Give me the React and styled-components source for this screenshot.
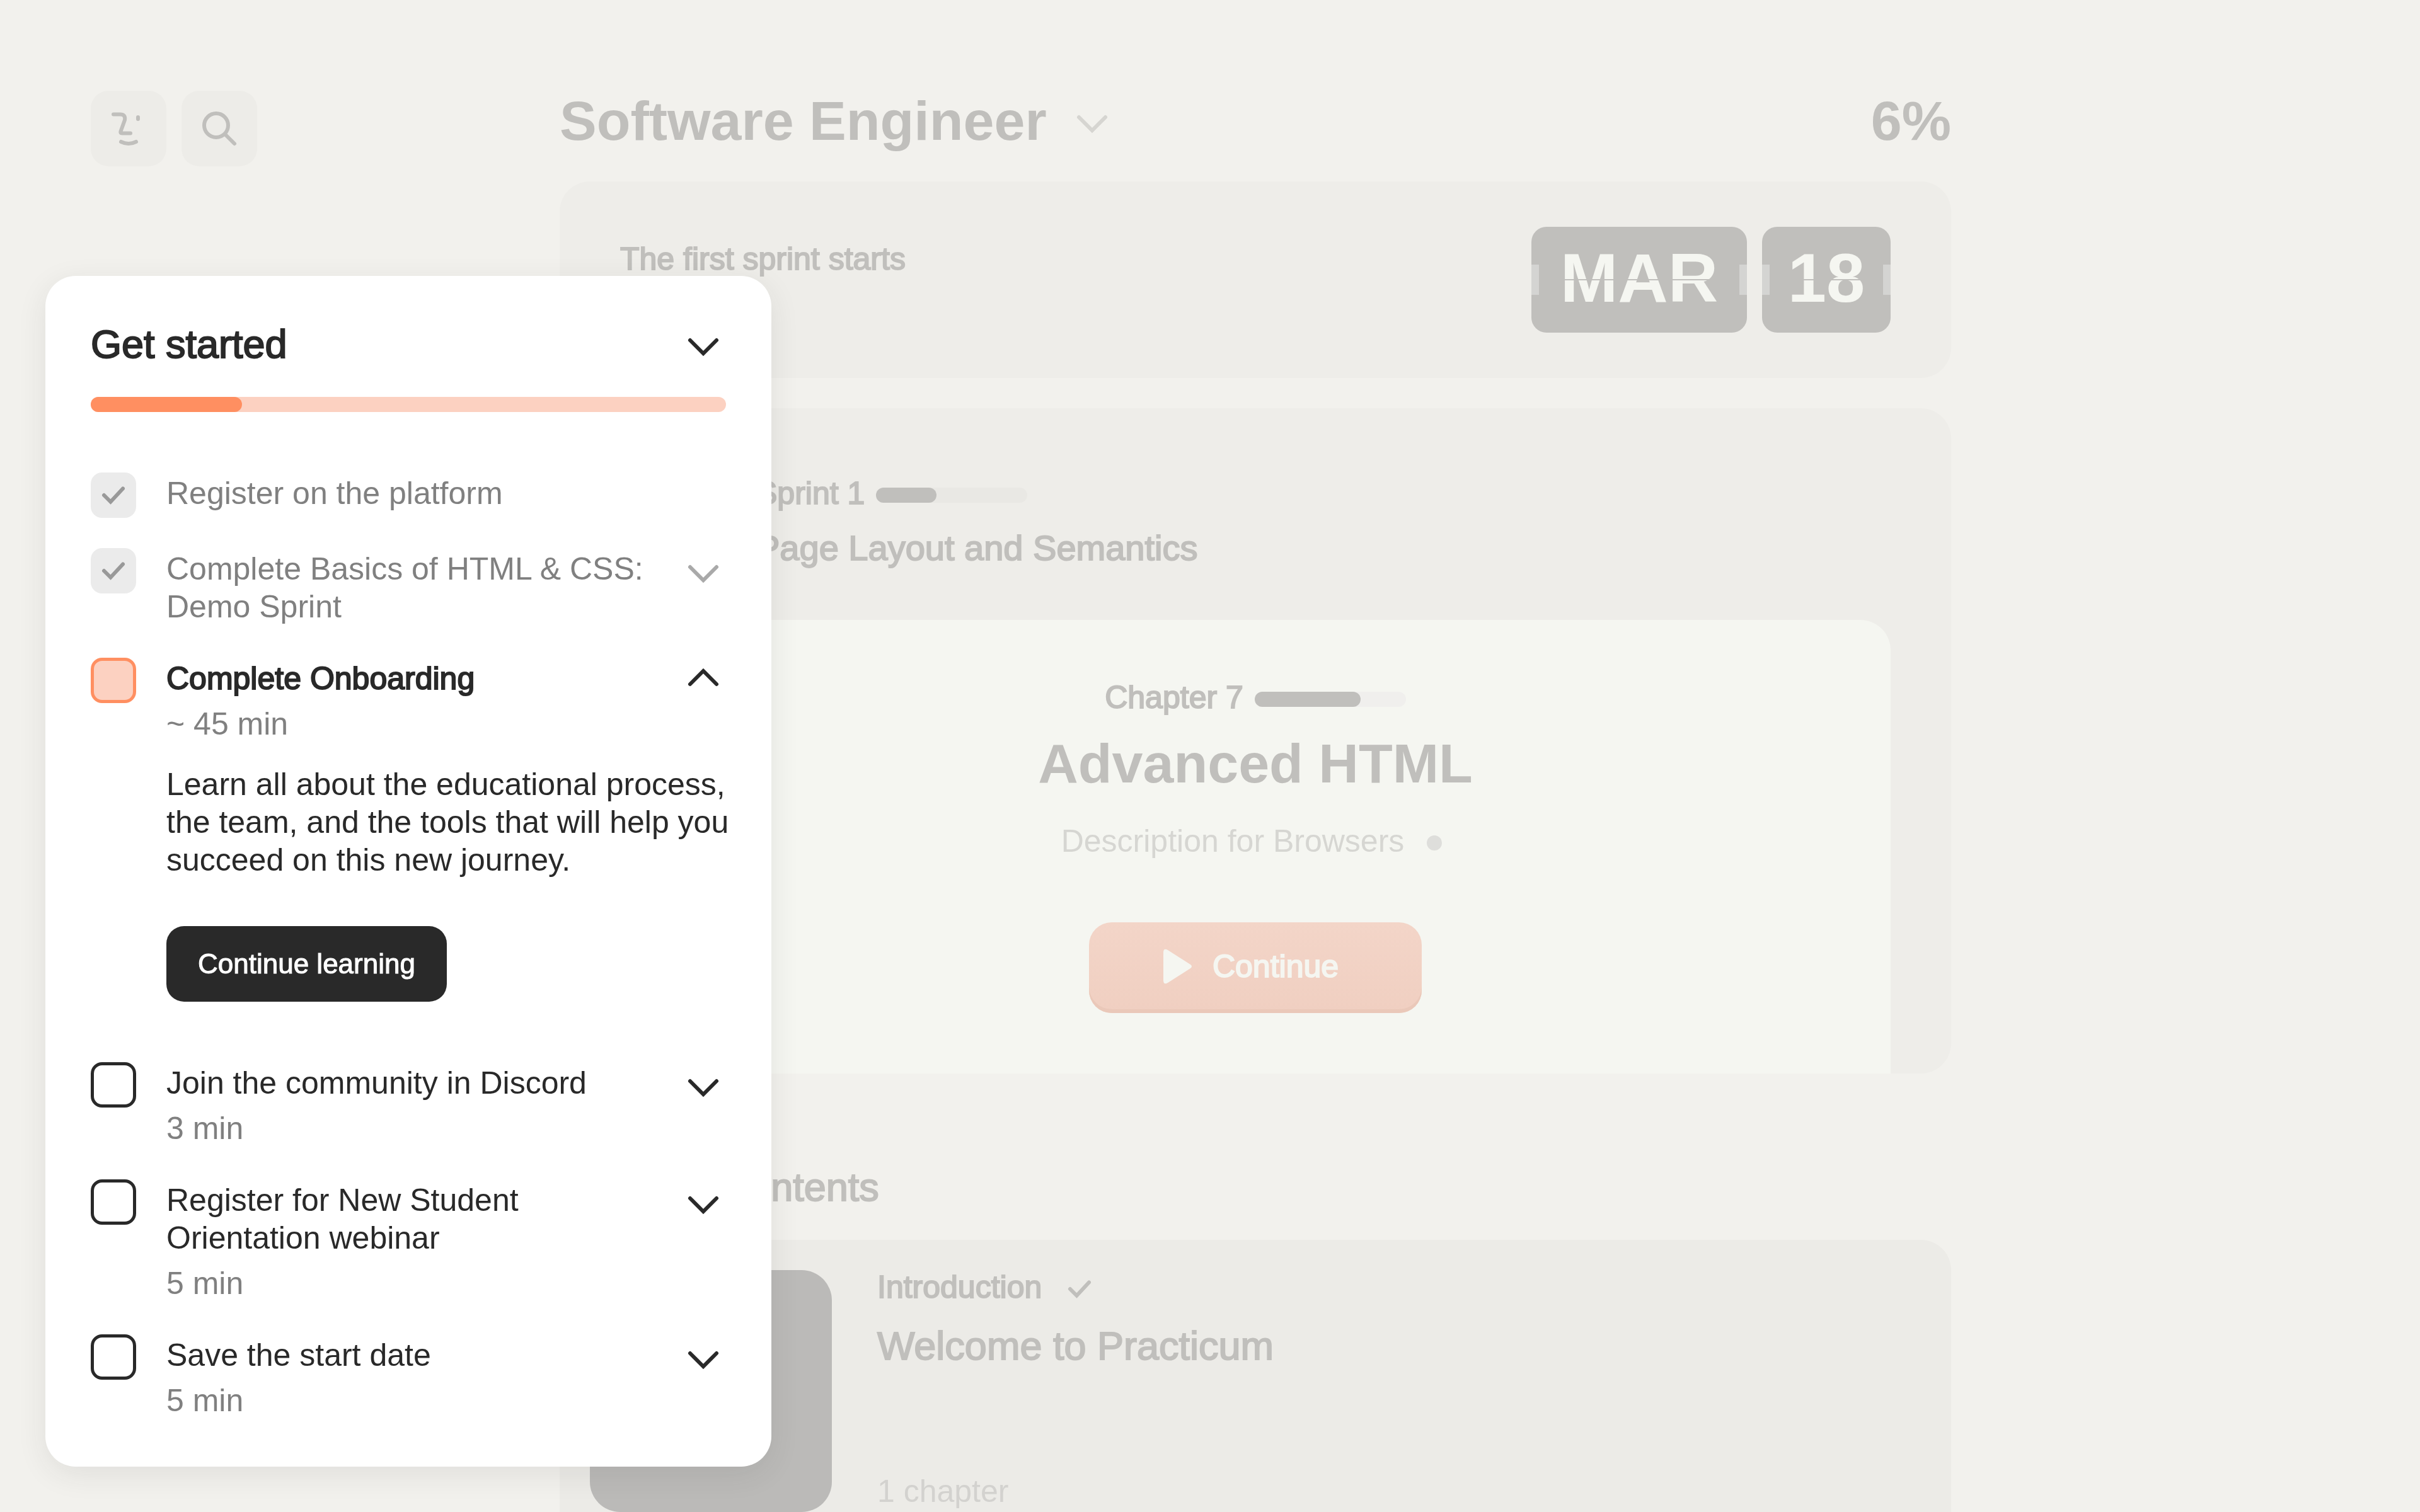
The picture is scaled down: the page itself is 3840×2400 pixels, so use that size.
import React from "react";
import styled, { createGlobalStyle, css } from "styled-components";

const GlobalStyle = createGlobalStyle`
  *, *::before, *::after { box-sizing: border-box; }
  body {
    margin: 0;
    background: #f2f1ed;
    font-family: "Liberation Sans", Arial, sans-serif;
    color: #292929;
    -webkit-font-smoothing: antialiased;
  }
  h1, h2, h3, p, ul { margin: 0; padding: 0; font-size: inherit; font-weight: inherit; }
  ul { list-style: none; }
  svg { display: block; flex: none; }
  button { font: inherit; border: 0; padding: 0; cursor: pointer; color: inherit; background: none; }
`;

const muted = "#c0bfbc";

/* The family has no medium cut, so a thin outline gives the in-between weight. */
const medium = css`
  font-weight: 400;
  -webkit-text-stroke: 2px currentColor;
`;

const bodyText = css`
  font-size: 50px;
  line-height: 60px;
`;

const Page = styled.div`
  display: grid;
  grid-template-columns: 744px minmax(0, 2208px);
  align-items: start;
  height: 100vh;
  overflow: hidden;
  padding: 144px 144px 0;
  color: ${muted};
`;

const Tools = styled.nav`
  display: flex;
  gap: 24px;
`;

const ToolButton = styled.button`
  display: grid;
  place-items: center;
  width: 120px;
  height: 120px;
  border-radius: 28px;
  background: #edece8;
`;

const Main = styled.main`
  display: flex;
  flex-direction: column;
  gap: 48px;
`;

const Header = styled.header`
  display: flex;
  justify-content: space-between;
  font-size: 88px;
  line-height: 96px;
  font-weight: 700;
`;

const CourseSwitch = styled.div`
  display: flex;
  align-items: center;
  gap: 36px;
`;

const ChevronButton = styled.button`
  display: block;
  flex: none;
  width: 72px;
  height: 72px;
  color: ${(p) => p.$color || "#292929"};
`;

const Card = styled.section`
  border-radius: 48px;
  background: #eeede9;
`;

const DateCard = styled(Card)`
  display: flex;
  justify-content: space-between;
  height: 312px;
  padding: 72px 96px;
`;

const Lead = styled.p`
  ${bodyText}
  ${medium}
  padding-top: 21px;
`;

const Flips = styled.div`
  display: flex;
  gap: 24px;
`;

const FlipTile = styled.div`
  position: relative;
  display: grid;
  place-items: center;
  width: ${(p) => p.$width};
  height: 168px;
  padding-bottom: 6px;
  border-radius: 24px;
  overflow: hidden;
  background: ${muted};
  color: #f5f6f1;
  font-size: 110px;
  line-height: 120px;
  font-weight: 700;
  &::before {
    content: "";
    position: absolute;
    inset: 60px 0;
    border: solid #d4d4d2;
    border-width: 0 12px;
  }
  &::after {
    content: "";
    position: absolute;
    left: 12px;
    right: 12px;
    top: 83px;
    height: 2px;
    background: ${muted};
  }
`;

const SprintCard = styled(Card)`
  padding: 96px 96px 0;
`;

const SprintHead = styled.div`
  display: flex;
  gap: 24px;
  height: 240px;
`;

const SprintBadge = styled.div`
  width: 192px;
  height: 192px;
  border-radius: 48px;
  background: #e4e3df;
`;

const SprintText = styled.div`
  padding-top: 9px;
`;

const Track = styled.div`
  width: ${(p) => p.$width || "240px"};
  height: 24px;
  border-radius: 12px;
  background: ${(p) => p.$track || "#e9e8e4"};
`;

const Fill = styled.div`
  width: ${(p) => p.$value};
  height: 100%;
  border-radius: 12px;
  background: ${(p) => p.$color || muted};
`;

const Meter = styled.div`
  ${bodyText}
  ${medium}
  display: flex;
  align-items: center;
  gap: 18px;
  & > ${Track} { margin-top: 6px; }
`;

const Heading = styled.h2`
  ${medium}
  padding-top: ${(p) => p.$top || "0"};
  font-size: ${(p) => p.$size || "63px"};
  line-height: 72px;
`;

const ChapterCard = styled.div`
  display: flex;
  flex-direction: column;
  align-items: center;
  height: 720px;
  padding-top: 93px;
  border-radius: 48px 48px 0 0;
  background: #f5f6f1;
`;

const ChapterTitle = styled.h3`
  margin-top: 27px;
  font-size: 88px;
  line-height: 96px;
  font-weight: 700;
`;

const ChapterNote = styled.p`
  ${bodyText}
  display: flex;
  align-items: center;
  gap: 36px;
  margin-top: 45px;
  padding-right: 12px;
  color: #d6d6d2;
`;

const Dot = styled.span`
  width: 24px;
  height: 24px;
  margin-top: 6px;
  border-radius: 50%;
  background: #dededb;
`;

const PrimaryButton = styled.button`
  && {
    ${bodyText}
    ${medium}
  }
  display: flex;
  align-items: center;
  justify-content: center;
  gap: 20px;
  width: 528px;
  height: 144px;
  margin-top: 99px;
  padding: 0 28px 4px 0;
  border-radius: 36px;
  background: linear-gradient(#f3d5c8, #f0cfc1);
  box-shadow: inset 0 -6px 0 #eac8b9;
  color: #f5f6f1;
`;

const ContentsTitle = styled(Heading)`
  padding: 96px 48px 0;
`;

const LessonCard = styled(Card)`
  display: flex;
  gap: 72px;
  padding: 48px;
  background: #ecebe7;
`;

const Thumb = styled.div`
  width: 384px;
  height: 384px;
  border-radius: 48px;
  background: #bbbab8;
`;

const LessonText = styled.div`
  display: flex;
  flex-direction: column;
  height: 384px;
  margin-top: -3px;
`;

const LessonStatus = styled.p`
  ${bodyText}
  ${medium}
  display: flex;
  align-items: center;
  gap: 24px;
  height: 60px;
  svg { margin-top: 6px; }
`;

const LessonMeta = styled.p`
  ${bodyText}
  margin-top: auto;
  color: #d3d2cf;
`;

const Panel = styled.aside`
  position: fixed;
  left: 72px;
  bottom: 72px;
  width: 1152px;
  padding: 72px;
  border-radius: 48px;
  background: #fff;
  box-shadow: 0 12px 48px rgba(41, 41, 41, 0.09);
`;

const PanelHeader = styled.header`
  display: flex;
  justify-content: space-between;
  margin-bottom: 48px;
`;

const TaskList = styled.ul`
  display: flex;
  flex-direction: column;
  gap: 48px;
  margin-top: 96px;
`;

const Task = styled.li`
  ${bodyText}
  display: grid;
  grid-template-columns: 72px minmax(0, 1fr) 72px;
  column-gap: 48px;
  align-items: start;
  color: ${(p) => (p.$done ? "#808080" : "#292929")};
`;

const TickBox = styled.span`
  display: grid;
  width: 72px;
  height: 72px;
  & > * { grid-area: 1 / 1; }
  svg { pointer-events: none; }
`;

const Tick = styled.input`
  appearance: none;
  width: 72px;
  height: 72px;
  margin: 0;
  border-radius: 18px;
  border: 5px solid #292929;
  background: #fff;
  &:checked { border-color: #ebebeb; background: #ebebeb; }
  ${(p) => p.$active && css`
    border-color: #ff8f61;
    background: #fcd1c1;
  `}
`;

const TaskBody = styled.div`
  display: flex;
  flex-direction: column;
  gap: 12px;
  padding: 3px 0;
  white-space: nowrap;
`;

const TaskLabel = styled.label`
  ${(p) => p.$active && medium}
`;

const Duration = styled.p`
  color: #808080;
`;

const TaskDetails = styled.div`
  grid-column: 2 / -1;
  padding: 33px 0 48px;
  white-space: nowrap;
`;

const DarkButton = styled.button`
  && {
    font-size: 44px;
    line-height: 48px;
    -webkit-text-stroke: 1px currentColor;
  }
  display: block;
  height: 120px;
  margin-top: 75px;
  padding: 0 50px;
  border-radius: 28px;
  background: #292929;
  color: #fff;
`;

function Chevron({ up }) {
  return (
    <svg width="72" height="72" viewBox="0 0 72 72" fill="none" stroke="currentColor" strokeWidth="6" strokeLinecap="round" aria-hidden="true">
      <path d={up ? "M15 42 36 21 57 42" : "M15 30 36 51 57 30"} />
    </svg>
  );
}

function Check({ color = "#999" }) {
  return (
    <svg width="72" height="72" viewBox="0 0 72 72" fill="none" stroke={color} strokeWidth="6" strokeLinecap="round" aria-hidden="true">
      <path d="M21 36 31.5 46.5 51 25.500" />
    </svg>
  );
}

function FaceIcon() {
  return (
    <svg width="72" height="72" viewBox="0 0 72 72" fill="none" stroke={muted} strokeWidth="6" strokeLinecap="round" strokeLinejoin="round" aria-hidden="true">
      <path d="M12 13.500h10.500q9 0 7.500 9l-6.500 18q-1 3 2 3H39" />
      <path d="M51 18v3" />
      <path d="M24 57q12 6 24 0" />
    </svg>
  );
}

function SearchIcon() {
  return (
    <svg width="72" height="72" viewBox="0 0 72 72" fill="none" stroke={muted} strokeWidth="6" strokeLinecap="round" aria-hidden="true">
      <circle cx="31" cy="31" r="19" />
      <path d="M45 45 60 60" />
    </svg>
  );
}

function PlayIcon() {
  return (
    <svg width="72" height="72" viewBox="0 0 72 72" fill="currentColor" aria-hidden="true">
      <path d="M14 14Q14 6 21 10L57 33Q61 36 57 39L21 62Q14 66 14 58Z" />
    </svg>
  );
}

const tasks = [
  { id: "register", lines: ["Register on the platform"], done: true, fixed: true },
  { id: "basics", lines: ["Complete Basics of HTML & CSS:", "Demo Sprint"], done: true },
  {
    id: "onboarding",
    lines: ["Complete Onboarding"],
    time: "~ 45 min",
    active: true,
    details: ["Learn all about the educational process,", "the team, and the tools that will help you", "succeed on this new journey."],
  },
  { id: "discord", lines: ["Join the community in Discord"], time: "3 min" },
  { id: "webinar", lines: ["Register for New Student", "Orientation webinar"], time: "5 min" },
  { id: "date", lines: ["Save the start date"], time: "5 min" },
];

function Lines({ lines }) {
  return lines.map((line, i) => (
    <React.Fragment key={line}>
      {i > 0 && <br />}
      {line}
    </React.Fragment>
  ));
}

function TaskItem({ task }) {
  return (
    <Task $done={task.done}>
      <TickBox>
        <Tick type="checkbox" id={task.id} defaultChecked={task.done} $active={task.active} />
        {task.done && <Check />}
      </TickBox>
      <TaskBody>
        <TaskLabel htmlFor={task.id} $active={task.active}>
          <Lines lines={task.lines} />
        </TaskLabel>
        {task.time && <Duration>{task.time}</Duration>}
      </TaskBody>
      {!task.fixed && (
        <ChevronButton $color={task.done ? "#a9a9a9" : "#292929"} aria-label="Toggle details" aria-expanded={!!task.active}>
          <Chevron up={task.active} />
        </ChevronButton>
      )}
      {task.details && (
        <TaskDetails>
          <p><Lines lines={task.details} /></p>
          <DarkButton>Continue learning</DarkButton>
        </TaskDetails>
      )}
    </Task>
  );
}

export default function App() {
  return (
    <>
      <GlobalStyle />
      <Page>
        <Tools>
          <ToolButton aria-label="Home"><FaceIcon /></ToolButton>
          <ToolButton aria-label="Search"><SearchIcon /></ToolButton>
        </Tools>
        <Main>
          <Header>
            <CourseSwitch>
              <h1>Software Engineer</h1>
              <ChevronButton $color="#d6d5d1" aria-label="Choose course"><Chevron /></ChevronButton>
            </CourseSwitch>
            <span>6%</span>
          </Header>
          <DateCard>
            <Lead>The first sprint starts</Lead>
            <Flips>
              <FlipTile $width="342px">MAR</FlipTile>
              <FlipTile $width="204px">18</FlipTile>
            </Flips>
          </DateCard>
          <SprintCard>
            <SprintHead>
              <SprintBadge />
              <SprintText>
                <Meter>
                  Sprint 1
                  <Track><Fill $value="40%" /></Track>
                </Meter>
                <Heading $top="21px" $size="56px">Page Layout and Semantics</Heading>
              </SprintText>
            </SprintHead>
            <ChapterCard>
              <Meter>
                Chapter 7
                <Track $track="#f0efed"><Fill $value="70%" /></Track>
              </Meter>
              <ChapterTitle>Advanced HTML</ChapterTitle>
              <ChapterNote>Description for Browsers <Dot /></ChapterNote>
              <PrimaryButton><PlayIcon />Continue</PrimaryButton>
            </ChapterCard>
          </SprintCard>
          <ContentsTitle>Course contents</ContentsTitle>
          <LessonCard>
            <Thumb />
            <LessonText>
              <LessonStatus>Introduction <Check color={muted} /></LessonStatus>
              <Heading $top="27px">Welcome to Practicum</Heading>
              <LessonMeta>1 chapter</LessonMeta>
            </LessonText>
          </LessonCard>
        </Main>
      </Page>
      <Panel>
        <PanelHeader>
          <Heading>Get started</Heading>
          <ChevronButton aria-label="Collapse"><Chevron /></ChevronButton>
        </PanelHeader>
        <Track $width="100%" $track="#fcd1c1"><Fill $value="240px" $color="#ff8f61" /></Track>
        <TaskList>
          {tasks.map((task) => <TaskItem key={task.id} task={task} />)}
        </TaskList>
      </Panel>
    </>
  );
}
